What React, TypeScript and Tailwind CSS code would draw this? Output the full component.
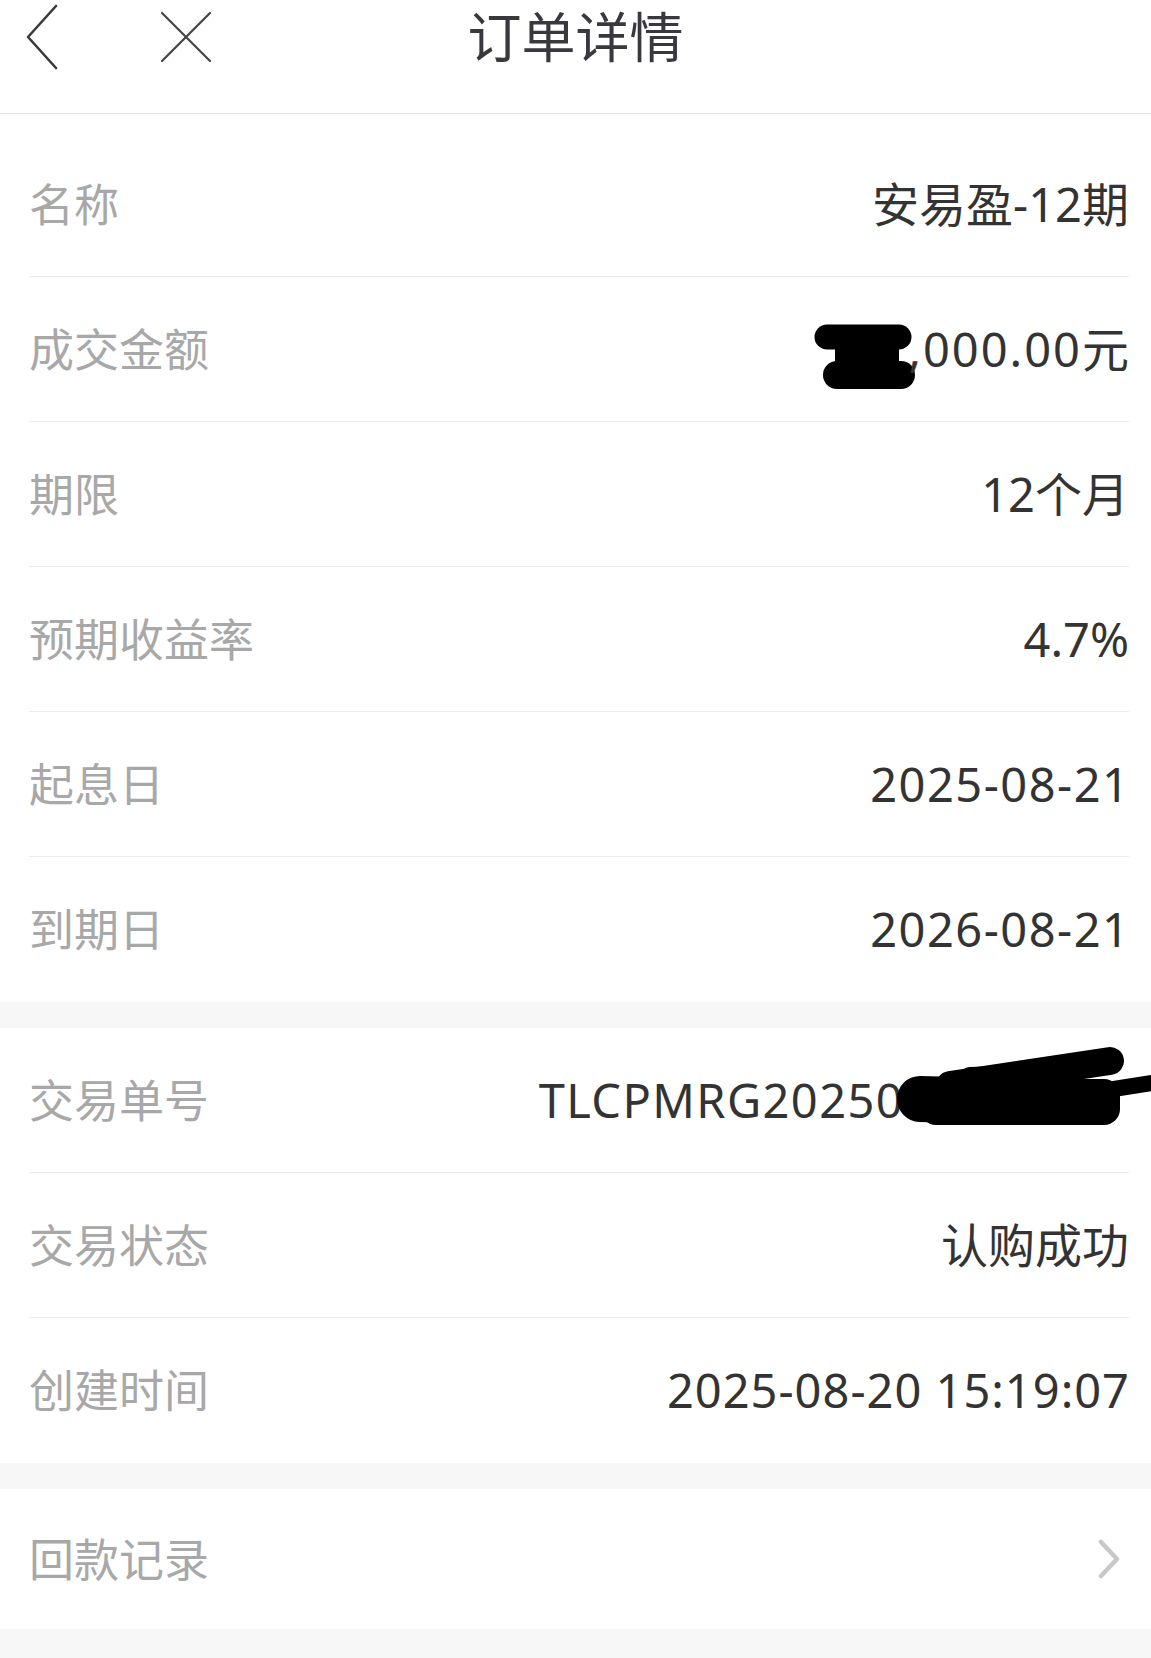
import React from "react";

const font = { fontFamily: '"Noto Sans", "Noto Sans CJK SC", sans-serif' };

function Row({ label, children, last }: { label: string; children: React.ReactNode; last?: boolean }) {
  return (
    <div
      className={
        "flex h-[145px] items-center justify-between " + (last ? "" : "border-b border-[#ececec]")
      }
    >
      <span className="text-[45px] leading-none text-[#a8a8a8]">{label}</span>
      <div className="flex items-center text-[47px] leading-none text-[#333333]">{children}</div>
    </div>
  );
}

export default function App() {
  return (
    <div className="min-h-screen w-full bg-[#f7f7f7]" style={font}>
      {/* Header */}
      <div className="h-[114px] border-b border-[#e6e6e6] bg-white">
        <div className="grid h-[74px] grid-cols-[1fr_auto_1fr] items-center">
          <div className="flex items-center pl-[24px]">
            <svg width="36" height="66" viewBox="0 0 36 66" fill="none">
              <polyline
                points="32,2 4,33 32,64"
                stroke="#3a3a3a"
                strokeWidth="2.6"
                strokeLinecap="round"
                strokeLinejoin="round"
              />
            </svg>
            <svg className="ml-[100px]" width="52" height="52" viewBox="0 0 52 52" fill="none">
              <line x1="2" y1="2" x2="50" y2="50" stroke="#444" strokeWidth="2.2" strokeLinecap="round" />
              <line x1="50" y1="2" x2="2" y2="50" stroke="#444" strokeWidth="2.2" strokeLinecap="round" />
            </svg>
          </div>
          <div className="text-[54px] leading-none text-[#38383e]">订单详情</div>
          <div />
        </div>
      </div>

      {/* Section 1 */}
      <div className="bg-white pl-[29px] pr-[22px] pt-[18px]">
        <Row label="名称">安易盈-12期</Row>
        <Row label="成交金额">
          <svg
            className="mr-[-7px] mt-[16px]"
            width="100"
            height="66"
            viewBox="0 0 100 66"
            fill="none"
            overflow="visible"
          >
            <line x1="12" y1="13" x2="84" y2="13" stroke="#000" strokeWidth="25" strokeLinecap="round" />
            <line x1="22" y1="51" x2="86" y2="51" stroke="#000" strokeWidth="28" strokeLinecap="round" />
            <rect x="20" y="14" width="64" height="38" fill="#000" />
          </svg>
          <span className="tracking-[2px]">,000.00</span>
          <span>元</span>
        </Row>
        <Row label="期限">12个月</Row>
        <Row label="预期收益率">4.7%</Row>
        <Row label="起息日">
          <span className="tracking-[1.5px] mr-[-1.5px]">2025-08-21</span>
        </Row>
        <Row label="到期日" last>
          <span className="tracking-[1.5px] mr-[-1.5px]">2026-08-21</span>
        </Row>
      </div>

      {/* Section 2 */}
      <div className="mt-[26px] bg-white pl-[29px] pr-[22px]">
        <Row label="交易单号">
          <span className="tracking-[1.4px]">TLCPMRG20250</span>
          <svg
            className="mb-[26px] mr-[-23px] ml-[-4px]"
            width="252"
            height="80"
            viewBox="0 0 252 80"
            fill="none"
            overflow="visible"
          >
            <line x1="20" y1="52" x2="95" y2="54" stroke="#000" strokeWidth="46" strokeLinecap="round" />
            <line x1="50" y1="38" x2="210" y2="14" stroke="#000" strokeWidth="28" strokeLinecap="round" />
            <line x1="150" y1="52" x2="252" y2="36" stroke="#000" strokeWidth="16" strokeLinecap="round" />
            <rect x="20" y="32" width="200" height="46" rx="16" fill="#000" />
            <line x1="70" y1="30" x2="130" y2="28" stroke="#000" strokeWidth="20" strokeLinecap="round" />
          </svg>
        </Row>
        <Row label="交易状态">认购成功</Row>
        <Row label="创建时间" last>
          <span className="tracking-[1px] mr-[-1px]">2025-08-20 15:19:07</span>
        </Row>
      </div>

      {/* Section 3 */}
      <div className="mt-[26px] bg-white pl-[29px] pr-[22px]">
        <div className="flex h-[140px] items-center justify-between">
          <span className="text-[45px] leading-none text-[#a8a8a8]">回款记录</span>
          <svg className="mr-[6px]" width="26" height="40" viewBox="0 0 26 40" fill="none">
            <polyline
              points="4,3 20,20 4,37"
              stroke="#c8c8c8"
              strokeWidth="4.5"
              strokeLinecap="round"
              strokeLinejoin="round"
            />
          </svg>
        </div>
      </div>
    </div>
  );
}
